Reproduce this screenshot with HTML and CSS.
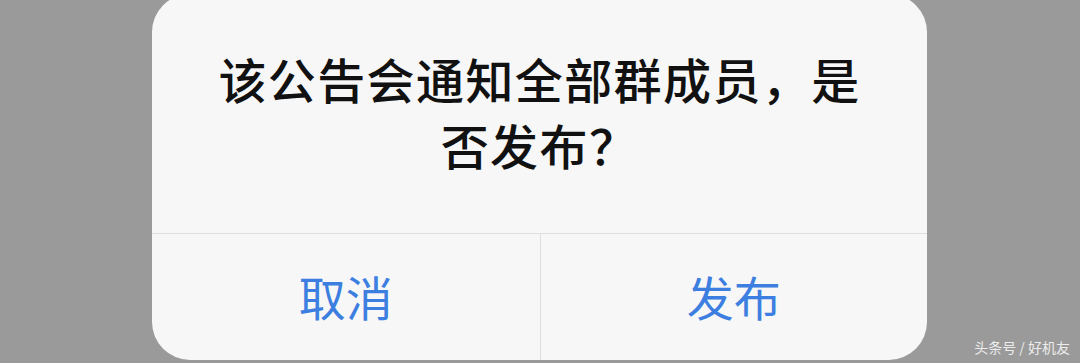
FILE: index.html
```html
<!DOCTYPE html>
<html lang="zh-CN">
<head>
<meta charset="utf-8">
<link rel="stylesheet" href="styles.css">
</head>
<body>
<div class="dialog">
  <div class="message"><p class="text">该公告会通知全部群成员，是否发布？</p></div>
  <div class="actions">
    <div class="btn">取消</div>
    <div class="btn">发布</div>
  </div>
</div>
<div class="watermark">头条号 / 好机友</div>
</body>
</html>
```
FILE: styles.css
```css
html, body {
  margin: 0;
  padding: 0;
}
body {
  width: 1080px;
  height: 363px;
  overflow: hidden;
  background: #9a9a9a;
  position: relative;
  font-family: "Noto Sans CJK SC", "Noto Sans", sans-serif;
}
.dialog {
  margin: -6px 0 0 152px;
  width: 775px;
  height: 366px;
  background: #f7f7f7;
  border-radius: 38px;
  display: flex;
  flex-direction: column;
  overflow: hidden;
}
.message {
  height: 240px;
  display: flex;
  align-items: center;
  justify-content: center;
  padding: 0 60px 5px;
  box-sizing: border-box;
  border-bottom: 1px solid #dedede;
}
.text {
  margin: 0;
  font-size: 48px;
  letter-spacing: 1.4px;
  line-height: 66px;
  font-weight: 500;
  color: #111;
  text-align: center;
}
.actions {
  flex: 1;
  display: grid;
  grid-template-columns: 1fr 1fr;
}
.btn {
  display: flex;
  align-items: center;
  justify-content: center;
  font-size: 47px;
  color: #3d7fe0;
  padding-bottom: 4px;
}
.btn + .btn {
  border-left: 1px solid #dedede;
}
.watermark {
  position: absolute;
  right: 10px;
  bottom: 6px;
  font-size: 14px;
  color: #ececec;
}
```
